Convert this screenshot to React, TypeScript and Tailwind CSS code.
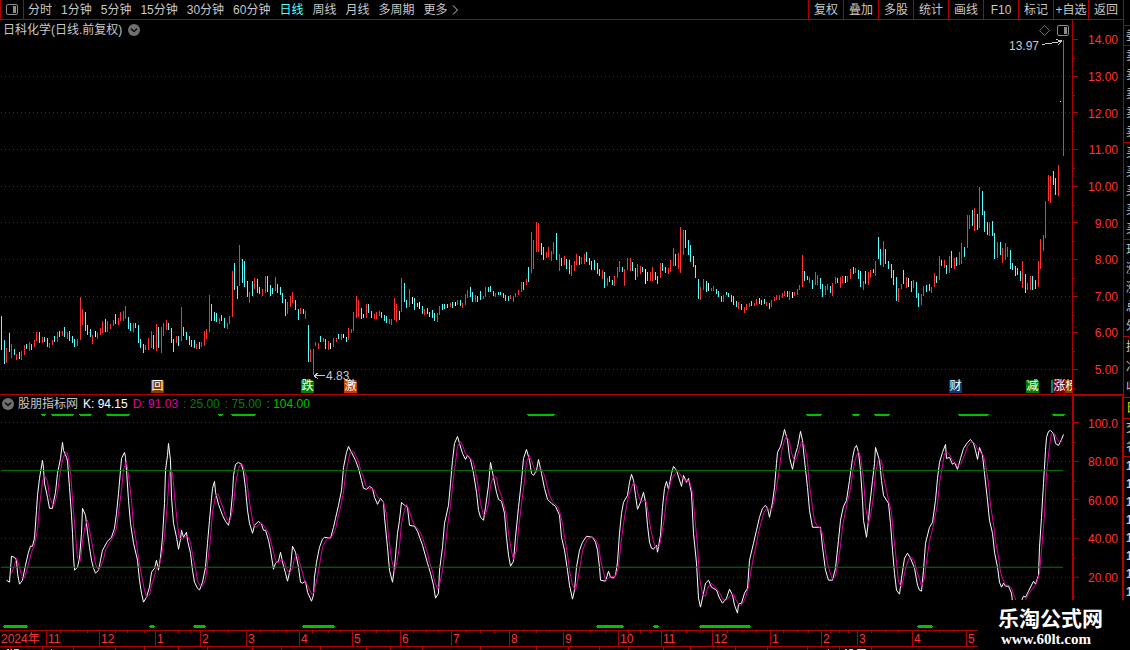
import { useMemo, useState } from 'react';
import clsx from 'clsx';

type Point = [number, number];

interface Marker {
  x: number;
  text: string;
  className: string;
}

const PERIODS = ['分时', '1分钟', '5分钟', '15分钟', '30分钟', '60分钟', '日线', '周线', '月线', '多周期'];
const TOOLS = ['复权', '叠加', '多股', '统计', '画线', 'F10', '标记', '+自选', '返回'];

const PRICE_TICKS = ['14.00', '13.00', '12.00', '11.00', '10.00', '9.00', '8.00', '7.00', '6.00', '5.00'];
const PRICE_TICK_Y = [39, 76, 112, 149, 186, 222, 259, 296, 332, 369];
const KD_TICKS = ['100.0', '80.00', '60.00', '40.00', '20.00'];
const KD_TICK_Y = [422, 461, 499, 538, 577];

// x, high, low, kind (r = up, c = down, w = unchanged)
const CANDLES = `
1,316,350,c 4,340,364,c 6,348,363,r 9,333,352,c 11,344,358,r 14,349,355,c 16,354,360,r 19,352,359,c 21,351,360,r 24,345,355,r
26,344,349,c 29,342,351,r 31,344,350,c 34,340,347,r 36,332,341,r 39,332,343,c 42,337,343,r 44,337,342,c 47,338,347,c 49,343,348,r
52,340,345,r 54,336,342,c 57,332,342,r 59,331,337,c 62,331,336,r 64,327,337,c 67,332,339,r 69,331,341,c 72,336,343,c 74,339,347,c
77,339,346,r 80,297,340,r 82,309,325,r 85,312,331,c 87,325,335,c 90,329,337,c 92,335,344,r 95,331,337,w 97,333,339,r 100,328,335,r
102,321,333,r 105,319,332,c 107,321,332,r 110,324,329,r 113,320,326,r 115,314,324,c 118,318,325,r 120,312,321,r 123,311,321,r 125,306,319,r
128,317,329,c 130,323,331,c 133,323,332,r 135,323,328,c 138,325,343,c 140,339,348,c 143,344,353,c 145,345,350,r 148,338,350,r 151,331,348,r
153,335,349,c 156,324,351,r 158,327,348,c 161,327,353,r 163,323,336,r 166,320,330,r 168,323,330,c 171,328,343,c 173,339,352,c 176,336,343,r
178,336,346,c 181,307,341,r 183,327,336,c 186,332,340,c 189,336,345,c 191,340,347,c 194,340,348,c 196,344,349,r 199,342,349,c 201,342,347,r
204,331,346,r 206,329,339,r 209,295,332,r 211,304,321,c 214,312,321,c 216,313,322,c 219,318,324,r 221,315,321,c 224,318,328,c 227,323,329,r
229,316,324,r 232,271,317,r 234,263,290,c 237,286,299,c 239,245,286,r 242,259,283,c 244,261,287,c 247,281,297,c 249,292,303,r 252,281,296,c
254,278,289,r 257,279,293,c 259,287,294,c 262,289,296,r 265,276,293,r 267,276,292,c 270,285,296,c 272,288,294,c 275,277,291,r 277,284,293,c
280,287,295,c 282,293,303,c 285,299,316,c 287,302,314,r 290,296,307,r 292,292,303,r 295,300,310,c 298,309,320,c 300,308,314,r 303,309,314,c
305,311,319,r 308,325,362,c 310,349,362,r 313,349,375,r 315,342,346,r 318,343,349,r 320,336,342,c 323,338,342,r 325,339,349,c 328,341,350,r
330,343,349,w 333,338,347,r 336,338,342,r 338,334,339,c 341,334,340,r 343,334,338,w 346,337,342,c 348,328,340,r 351,329,333,r 353,312,331,r
356,296,318,r 358,300,317,r 361,308,319,c 363,314,318,c 366,304,318,r 368,304,313,c 371,311,318,c 374,314,319,r 376,312,319,r 379,311,316,r
381,312,318,c 384,315,321,c 386,316,323,c 389,319,324,r 391,319,325,r 394,298,320,r 396,304,322,r 399,311,320,c 401,278,312,r 404,283,302,c
406,300,308,c 409,289,307,r 412,297,304,w 414,298,310,c 417,303,307,c 419,302,309,w 422,306,314,c 424,309,315,r 427,308,314,c 429,312,317,c
432,310,318,c 434,313,321,c 437,313,322,r 439,306,315,r 442,304,310,c 444,304,309,c 447,304,308,c 450,303,307,r 452,302,308,c 455,302,306,w
457,300,305,r 460,300,306,c 462,303,308,r 465,294,305,r 467,290,298,r 470,287,297,c 472,292,302,c 475,295,302,r 477,296,302,c 480,291,300,c
483,296,299,r 485,287,297,r 488,287,292,c 490,286,292,c 493,291,296,c 495,293,297,r 498,292,295,c 500,292,295,c 503,293,298,c 505,295,301,c
508,296,301,c 510,295,299,r 513,296,302,r 515,293,297,r 518,290,295,r 521,282,292,r 523,282,290,c 526,279,285,r 528,267,282,c 531,232,273,r
533,240,269,r 536,222,252,r 538,223,252,r 541,243,255,c 543,247,260,c 546,252,258,r 548,247,257,r 551,251,261,r 553,242,254,r 556,233,260,c
559,254,271,r 561,258,266,c 564,256,265,r 566,259,269,c 569,260,274,c 571,265,276,r 574,261,271,r 576,254,265,r 579,256,265,c 581,257,264,r
584,254,264,r 586,252,262,c 589,258,265,c 591,261,270,c 594,260,270,c 597,263,274,c 599,269,276,c 602,270,279,r 604,272,288,c 607,278,286,r
609,276,282,c 612,280,285,c 614,276,286,r 617,267,278,r 619,261,272,r 622,267,272,c 624,269,286,r 627,258,270,r 630,258,271,r 632,262,271,c
635,268,280,c 637,264,277,r 640,266,274,r 642,267,272,c 645,269,284,w 647,272,281,c 650,272,281,r 652,267,281,r 655,272,280,c 657,276,284,c
660,263,278,r 662,263,271,c 665,267,273,c 668,268,274,r 670,260,272,r 673,248,266,r 675,254,266,c 678,253,269,r 680,227,273,r 683,230,255,r
685,230,248,c 688,240,255,c 690,245,262,c 693,256,267,c 695,265,278,c 698,279,299,c 700,287,300,r 703,279,290,r 706,281,292,c 708,283,291,w
711,288,291,r 713,286,291,r 716,289,294,c 718,291,297,c 721,296,302,c 723,295,302,r 726,292,295,c 728,293,297,c 731,295,302,c 733,296,305,c
736,301,307,c 738,302,309,r 741,304,310,c 744,307,313,r 746,304,310,r 749,303,307,r 751,301,306,c 754,303,306,r 756,299,305,r 759,298,304,c
761,300,305,c 764,299,304,c 766,302,306,r 769,303,309,c 771,300,307,r 774,297,301,r 776,295,300,r 779,295,300,r 782,293,298,r 784,291,296,r
787,291,297,c 789,291,300,r 792,292,298,w 794,292,296,r 797,289,295,r 799,285,290,r 802,255,287,r 804,271,281,c 807,276,280,c 809,277,283,r
812,280,289,c 815,272,285,r 817,275,285,r 820,278,289,c 822,284,297,c 825,286,295,r 827,284,290,r 830,286,293,c 832,283,296,r 835,277,284,r
837,278,283,c 840,277,288,r 842,276,283,r 845,276,283,w 847,276,282,r 850,269,279,r 853,267,274,c 855,268,273,r 858,270,279,c 860,271,287,c
863,281,290,r 865,271,284,c 868,272,285,r 870,270,278,r 873,269,273,c 875,261,276,r 878,237,259,c 880,249,265,c 883,241,267,r 885,249,264,c
888,261,269,c 891,264,278,c 893,270,285,c 896,277,301,c 898,288,302,r 901,284,289,r 903,270,284,c 906,277,288,r 908,278,287,w 911,281,292,c
913,280,288,r 916,282,298,c 918,293,307,c 921,294,305,r 923,286,296,r 926,285,292,c 929,284,291,c 931,287,293,r 934,273,287,r 936,276,283,c
939,256,280,r 941,260,266,c 944,260,268,r 946,265,274,c 949,256,273,r 951,251,268,c 954,258,269,r 956,257,266,c 959,252,265,r 961,243,264,r
964,247,257,c 967,215,248,r 969,215,229,r 972,210,226,c 974,208,231,r 977,214,230,c 979,187,228,r 982,191,215,c 984,211,232,c 987,222,235,c
989,223,236,r 992,221,236,c 994,233,259,c 997,242,258,r 1000,242,255,c 1002,248,263,r 1005,243,260,r 1007,247,257,r 1010,250,269,c 1012,263,270,c
1015,266,276,c 1017,268,275,c 1020,271,281,c 1022,261,288,r 1025,274,293,c 1027,283,290,r 1030,276,290,r 1032,276,290,c 1035,280,289,c 1038,261,287,r
1040,239,269,r 1043,235,251,r 1045,201,238,r 1048,175,201,r 1050,176,203,r 1053,171,185,c 1055,178,195,c 1058,165,196,r 1060,101,102,w 1063,40,156,r`;

const K_LINE = `
6,580 9,582 11,556 14,557 16,560 17,573 19,584 22,580 25,565 28,552 30,546 32,546 34,538 36,510 37,495 39,478 42,460 43,468 44,483 47,497
49,508 52,508 53,502 55,492 57,473 60,458 62,442 63,450 66,457 67,461 69,487 71,515 72,533 73,557 74,570 77,567 79,558 81,533 82,508 85,515
87,532 89,547 91,560 93,568 95,573 98,570 100,560 102,550 107,541 111,537 114,528 116,513 118,493 120,470 121,458 124,452 125,457 126,470 128,500 130,523
133,543 137,560 139,580 141,593 143,602 146,597 149,587 151,572 154,568 156,560 158,570 160,557 162,537 164,503 165,470 167,455 168,443 170,460 171,497 173,523
176,537 178,549 180,539 181,530 183,537 186,532 187,540 190,553 192,570 194,582 197,588 199,590 202,582 205,567 207,543 209,520 211,498 212,488 214,481 215,492
218,504 222,515 225,521 228,525 230,515 232,493 233,475 235,464 238,462 241,464 243,472 245,488 247,510 249,523 252,533 254,525 258,521 261,524 263,530 265,530
268,540 270,550 273,569 275,563 278,561 280,552 282,562 285,573 287,581 290,568 292,546 295,552 298,567 300,582 302,583 305,581 307,592 311,601 313,595 314,577
316,562 319,547 322,539 324,537 330,538 333,527 335,518 338,505 341,490 343,467 346,452 348,446 351,452 355,460 358,468 361,480 363,488 366,489 369,486 372,488
374,497 377,504 380,498 383,502 384,517 387,547 389,570 392,582 394,567 397,533 399,520 401,502 404,505 407,507 409,525 414,526 417,531 422,545 427,563 430,573
433,585 435,598 438,593 439,570 442,547 444,523 448,505 450,483 452,460 454,443 457,436 459,443 462,453 465,459 467,455 470,459 473,473 476,492 478,510 480,517
483,520 485,507 488,485 490,462 493,477 496,492 498,499 501,501 504,513 506,537 508,555 510,566 513,561 515,537 518,507 521,480 523,458 526,449 529,460 531,473
533,475 536,470 538,459 541,473 544,488 547,499 551,503 555,506 559,515 561,537 564,550 567,570 569,585 572,599 574,590 576,567 579,550 582,542 586,536 592,537
595,542 597,550 599,567 600,580 605,581 608,571 610,577 613,578 615,575 617,562 619,533 621,513 623,502 627,495 629,482 631,474 633,480 635,495 637,509 640,502
643,492 645,502 647,525 649,542 651,548 653,549 656,545 657,552 660,535 662,507 664,488 666,481 668,489 671,473 673,466 676,470 681,486 683,475 686,482 688,478
691,493 693,533 696,563 698,598 700,607 703,593 705,583 708,580 711,587 716,590 719,598 722,603 726,598 729,589 732,595 734,605 737,613 738,604 741,603 744,593
747,588 749,560 753,543 756,530 759,517 762,508 765,505 767,508 769,517 772,502 774,487 776,463 777,452 780,446 782,438 784,429 787,440 789,457 792,469 795,453
797,447 800,431 802,440 804,460 807,487 809,510 812,527 820,527 822,547 825,570 828,580 832,580 835,568 838,540 840,520 843,506 846,500 849,480 852,458 854,448
856,445 858,452 860,470 862,500 863,520 866,537 868,520 869,507 872,480 874,463 875,447 879,460 881,480 883,495 888,503 890,523 892,550 894,573 896,590 899,594
901,578 904,558 907,553 910,558 914,568 917,585 919,590 921,591 923,570 925,543 929,527 932,522 935,500 937,478 939,462 942,452 945,444 946,458 949,457 952,464
954,462 957,469 960,458 963,448 967,442 970,439 973,443 975,450 977,459 979,447 982,455 984,473 987,500 989,520 992,533 994,552 997,567 999,582 1001,587 1003,583
1005,586 1008,586 1011,593 1012,602 1018,613 1022,598 1023,596 1025,597 1028,591 1033,581 1035,584 1038,575 1039,547 1041,517 1043,483 1045,450 1046,437 1048,431 1050,430 1053,433
1055,443 1058,445 1061,439 1063,434`;

const OVERBOUGHT: Point[] = [[41, 46], [51, 74], [79, 92], [106, 130], [218, 223], [231, 256], [527, 555], [806, 822], [852, 860], [874, 890], [958, 989], [1052, 1065]];
const OVERSOLD: Point[] = [[3, 28], [149, 155], [193, 206], [302, 335], [596, 624], [653, 659], [699, 751], [917, 933]];

const MONTHS: [string, number][] = [
  ['2024年', 46], ['11', 53], ['12', 56], ['1', 45], ['2', 46], ['3', 53], ['4', 53], ['5', 48], ['6', 51], ['7', 58],
  ['8', 54], ['9', 55], ['10', 43], ['11', 51], ['12', 58], ['1', 51], ['2', 36], ['3', 55], ['4', 54], ['5', 12],
];
const WEEK_TICKS = [
  60, 73, 87, 115, 127, 144, 165, 178, 190, 213, 228, 260, 273, 286, 312, 328, 340, 364, 376, 388, 413, 426, 438, 466, 480, 494,
  523, 536, 549, 577, 590, 605, 628, 640, 650, 673, 686, 700, 727, 742, 756, 783, 797, 808, 830, 839, 848, 871, 885, 898, 925, 939, 953,
];
const LOWER_TICKS = [10, 42, 73, 115, 144, 178, 207, 252, 281, 320, 366, 390, 422, 480, 536, 568, 599, 628, 663, 690, 735, 767, 807, 839, 871];

const MARKERS: Marker[] = [
  { x: 151, text: '回', className: 'bg-[#804000]' },
  { x: 301, text: '跌', className: 'bg-[#008000]' },
  { x: 344, text: '激', className: 'bg-[#c04000]' },
  { x: 949, text: '财', className: 'bg-[#003c78]' },
  { x: 1026, text: '减', className: 'bg-[#008000]' },
  { x: 1051, text: '', className: 'bg-[#008080]' },
  { x: 1053, text: '涨', className: 'bg-[#800000]' },
  { x: 1065, text: '榜', className: 'bg-[#804000]' },
];

const CANDLE_COLORS = { r: '#ff3232', c: '#54ffff', w: '#ffffff' };

const CHART_WIDTH = 1072;
const TIME_AXIS_WIDTH = 978;
const BAR_STEP = 2.55;

const pct = (x: number, total = CHART_WIDTH) => `${(x / total) * 100}%`;

function candlePath(kind: string) {
  return CANDLES.trim()
    .split(/\s+/)
    .map((c) => c.split(','))
    .filter((c) => c[3] === kind)
    .map(([x, high, low]) => `M${Number(x) + 0.5} ${high}V${low}`)
    .join('');
}

function valueAt(points: Point[], x: number) {
  const i = points.findIndex((p) => p[0] >= x);
  if (i <= 0) return points[i === 0 ? 0 : points.length - 1][1];
  const [x0, y0] = points[i - 1];
  const [x1, y1] = points[i];
  return y0 + ((y1 - y0) * (x - x0)) / (x1 - x0);
}

// D is the three-bar mean of K
function smooth(points: Point[]): Point[] {
  const result: Point[] = [];
  for (let x = 11; x <= 1063; x += BAR_STEP) {
    const sum = valueAt(points, x) + valueAt(points, x - BAR_STEP) + valueAt(points, x - 2 * BAR_STEP);
    result.push([Math.round(x), Math.round(sum / 3)]);
  }
  return result;
}

function DropIcon() {
  return (
    <svg viewBox="0 0 12 12" className="h-3 w-3" aria-hidden="true">
      <circle cx="6" cy="6" r="6" fill="#707070" />
      <path d="M3 4.7L6 7.5L9 4.7" fill="none" stroke="#101010" strokeWidth="1.6" />
    </svg>
  );
}

function PanelIcon() {
  return (
    <svg viewBox="0 0 12 11" className="h-[11px] w-3" aria-hidden="true">
      <rect x="0.5" y="0.5" width="11" height="10" rx="1.5" fill="none" stroke="#8c8c8c" />
      <rect x="7" y="2" width="3" height="7" fill="#8c8c8c" />
    </svg>
  );
}

function Toolbar() {
  const [period, setPeriod] = useState('日线');

  return (
    <header className="flex h-5 shrink-0 border-b border-[#b00000] text-[#c8c8c8]">
      <button aria-label="侧栏" className="flex w-6 items-center justify-center border-x border-[#b00000] pb-px">
        <PanelIcon />
      </button>
      <nav className="flex flex-1 items-center gap-[9px] whitespace-nowrap pl-1">
        {PERIODS.map((p) => (
          <button key={p} onClick={() => setPeriod(p)} className={clsx('leading-4', p === period && 'text-[#54ffff]')}>
            {p}
          </button>
        ))}
        <button className="flex items-center gap-1 leading-4">
          更多
          <svg viewBox="0 0 6 10" className="h-2.5 w-1.5" fill="none" stroke="currentColor" aria-hidden="true">
            <path d="M1 0.5L5.5 5L1 9.5" />
          </svg>
        </button>
      </nav>
      <div className="flex">
        {TOOLS.map((tool) => (
          <button key={tool} className="w-[35px] whitespace-nowrap border-l border-[#b00000] text-center leading-[18px]">
            {tool}
          </button>
        ))}
      </div>
    </header>
  );
}

function GridLines({ ys }: { ys: number[] }) {
  return (
    <path
      d={ys.map((y) => `M1 ${y + 0.5}H${CHART_WIDTH}`).join('')}
      stroke="#b40000"
      strokeDasharray="1 3"
      fill="none"
    />
  );
}

function AxisTicks({ ys, viewBox }: { ys: number[]; viewBox: string }) {
  const half = (ys[1] - ys[0]) / 2;
  return (
    <svg viewBox={viewBox} preserveAspectRatio="none" className="h-full w-[5px]" shapeRendering="crispEdges" aria-hidden="true">
      <path
        d={ys.map((y) => `M0 ${y + 0.5}H5M0 ${Math.round(y + half) + 0.5}H2`).join('')}
        stroke="#b00000"
        fill="none"
      />
    </svg>
  );
}

function PricePane() {
  return (
    <section className="flex min-h-0 grow-[375] basis-0 border-b border-[#b00000]">
      <div className="relative min-w-0 flex-1 overflow-hidden">
        <svg viewBox="0 20 1072 374" preserveAspectRatio="none" className="absolute inset-0 h-full w-full" shapeRendering="crispEdges">
          <GridLines ys={PRICE_TICK_Y.slice(1)} />
          <path d={candlePath('c')} stroke={CANDLE_COLORS.c} />
          <path d={candlePath('r')} stroke={CANDLE_COLORS.r} />
          <path d={candlePath('w')} stroke={CANDLE_COLORS.w} />
          <path d="M314 375.5H325M318 372.5L314 375.5L318 378.5" stroke="#c8c8c8" fill="none" />
          <path d="M1042 44.5L1061 41.5M1056 39.5L1061.5 41L1058 45" stroke="#c8c8c8" fill="none" />
        </svg>
        <div className="relative flex h-5 items-center justify-between px-[3px]">
          <h1 className="flex items-center gap-1.5 text-[#c8c8c8]">
            日科化学(日线.前复权)
            <button aria-label="切换股票"><DropIcon /></button>
          </h1>
          <div className="flex items-center gap-[7px]">
            <svg viewBox="0 0 11 11" className="h-[11px] w-[11px]" aria-hidden="true">
              <path d="M5.5 0.5L10.5 5.5L5.5 10.5L0.5 5.5Z" fill="none" stroke="#707070" />
            </svg>
            <PanelIcon />
          </div>
        </div>
        <span className="absolute top-[18px] leading-4 text-[#c8c8c8]" style={{ left: pct(1009) }}>13.97</span>
        <span className="absolute bottom-2.5 leading-4 text-[#c8c8c8]" style={{ left: pct(326) }}>4.83</span>
        {MARKERS.map((m) => (
          <span
            key={m.x}
            className={clsx('absolute bottom-px h-[13px] w-[13px] rounded-tr-xs text-center leading-[13px] text-white', m.className)}
            style={{ left: pct(m.x) }}
          >
            {m.text}
          </span>
        ))}
      </div>
      <div className="flex w-[51px] border-l border-[#b00000]">
        <AxisTicks ys={PRICE_TICK_Y} viewBox="0 20 5 374" />
        <ol className="flex flex-1 flex-col pb-1.5 pr-[5px] pt-0.5 text-right text-[#ff3232]">
          {PRICE_TICKS.map((t) => (
            <li key={t} className="flex flex-1 items-center justify-end leading-none">{t}</li>
          ))}
        </ol>
      </div>
    </section>
  );
}

function IndicatorPane() {
  const k = useMemo(() => K_LINE.trim().split(/\s+/).map((p) => p.split(',').map(Number) as Point), []);
  const d = useMemo(() => smooth(k), [k]);

  return (
    <section className="flex min-h-0 grow-[235] basis-0">
      <div className="relative min-w-0 flex-1 overflow-hidden">
        <svg viewBox="0 395 1072 235" preserveAspectRatio="none" className="absolute inset-0 h-full w-full" shapeRendering="crispEdges">
          <GridLines ys={KD_TICK_Y} />
          <g transform="translate(0.5 0.5)" fill="none">
            <polyline points={k.join(' ')} stroke="#ffffff" />
            <polyline points={d.join(' ')} stroke="#e000a8" />
          </g>
          <path d="M1 470.5H1063M1 567.5H1063" stroke="#008000" />
          <g fill="#00c000">
            {OVERBOUGHT.map(([a, b]) => (
              <path key={a} d={`M${a} 414H${b}V415H${b - 1}V416H${a + 1}V415H${a}Z`} />
            ))}
            {OVERSOLD.map(([a, b]) => (
              <path key={a} d={`M${a + 1} 625H${b - 1}V626H${b}V627H${b - 1}V628H${a + 1}V627H${a}V626H${a + 1}Z`} />
            ))}
          </g>
        </svg>
        <div className="relative flex h-[18px] items-center gap-1 whitespace-nowrap pl-0.5">
          <button aria-label="切换指标"><DropIcon /></button>
          <h2 className="text-[#c8c8c8]">股朋指标网</h2>
          <span className="pl-px text-white">K: 94.15</span>
          <span className="pl-px text-[#e000a8]">D: 91.03</span>
          <span className="pl-px text-[#008000]">: 25.00</span>
          <span className="pl-px text-[#008000]">: 75.00</span>
          <span className="pl-px text-[#00c000]">: 104.00</span>
        </div>
      </div>
      <div className="flex w-[51px] border-l-2 border-r border-t border-[#b00000]">
        <AxisTicks ys={KD_TICK_Y} viewBox="0 396 5 234" />
        <ol className="flex flex-1 flex-col pb-[33px] pr-1 pt-2 text-right text-[#ff3232]">
          {KD_TICKS.map((t) => (
            <li key={t} className="flex flex-1 items-center justify-end leading-none">{t}</li>
          ))}
        </ol>
      </div>
    </section>
  );
}

function TimeAxis() {
  return (
    <footer className="mr-[145px] shrink-0">
      <div className="relative h-[17px] border-y border-[#b00000]">
        <svg viewBox="0 631 978 15" preserveAspectRatio="none" className="absolute inset-0 h-full w-full" shapeRendering="crispEdges" aria-hidden="true">
          <path d={WEEK_TICKS.map((x) => `M${x + 0.5} 631V633`).join('')} stroke="#b00000" />
        </svg>
        <ol className="flex h-full text-[#ff3232]">
          {MONTHS.map(([label, width], i) => (
            <li
              key={i}
              className={clsx('shrink-0 whitespace-nowrap pl-px leading-4', i > 0 && 'border-l border-[#b00000]')}
              style={{ width: pct(width, TIME_AXIS_WIDTH) }}
            >
              {label}
            </li>
          ))}
        </ol>
      </div>
      <svg viewBox="0 647 978 3" preserveAspectRatio="none" className="block h-[3px] w-full" shapeRendering="crispEdges" aria-hidden="true">
        <path d={LOWER_TICKS.map((x) => `M${x + 0.5} 647V650`).join('')} stroke="#b00000" />
        <path d="M7 649.5H9M11 649.5H12M14 649.5H19M51 649.5H52M828 649.5H829" stroke="#c8c8c8" />
        <path d="M845 649.5H847M849 649.5H853M857 649.5H866" stroke="#54ffff" />
      </svg>
    </footer>
  );
}

function QuoteStrip() {
  return (
    <aside className="flex w-[7px] shrink-0 flex-col overflow-hidden border-l border-[#b00000] text-[#c8c8c8]">
      <div className="h-[25px] shrink-0" />
      <QuoteGroup rows={['委']} className="h-5" />
      <QuoteGroup rows={['卖', '卖', '卖', '卖', '卖']} className="h-[97px]" />
      <QuoteGroup rows={['买', '买', '买', '买', '买']} className="h-[97px]" />
      <QuoteGroup rows={['现', '涨', '涨', '总', '外']} className="h-[97px]" />
      <QuoteGroup rows={['换', '净', '收']} className="h-[61px]" />
      <QuoteGroup rows={['日']} className="h-[21px] text-[#e0e000]" />
      <QuoteGroup rows={['交', '名']} className="h-[38px]" />
      <QuoteGroup rows={['1', '1', '1', '1', '1', '1', '1', '1']} className="h-[145px] font-bold" />
    </aside>
  );
}

function QuoteGroup({ rows, className }: { rows: string[]; className: string }) {
  return (
    <ul className={clsx('flex shrink-0 flex-col justify-around border-t border-[#b00000] pl-0.5', className)}>
      {rows.map((row, i) => (
        <li key={i} className="whitespace-nowrap leading-none">{row}</li>
      ))}
    </ul>
  );
}

export default function App() {
  return (
    <div className="relative flex h-screen min-h-[480px] overflow-hidden bg-black font-['Liberation_Sans','Noto_Sans_CJK_SC',sans-serif] text-xs">
      <main className="flex min-w-0 flex-1 flex-col">
        <Toolbar />
        <PricePane />
        <IndicatorPane />
        <TimeAxis />
      </main>
      <QuoteStrip />
      <a
        href="#home"
        className="absolute bottom-0 right-0 flex h-[50px] w-[152px] flex-col bg-black pl-5 pt-[7px] text-white"
      >
        <span className="text-[21px] font-bold leading-6">乐淘公式网</span>
        <span className="pl-[3px] font-['Liberation_Serif',serif] text-[15px] font-bold leading-4">www.60lt.com</span>
      </a>
    </div>
  );
}
